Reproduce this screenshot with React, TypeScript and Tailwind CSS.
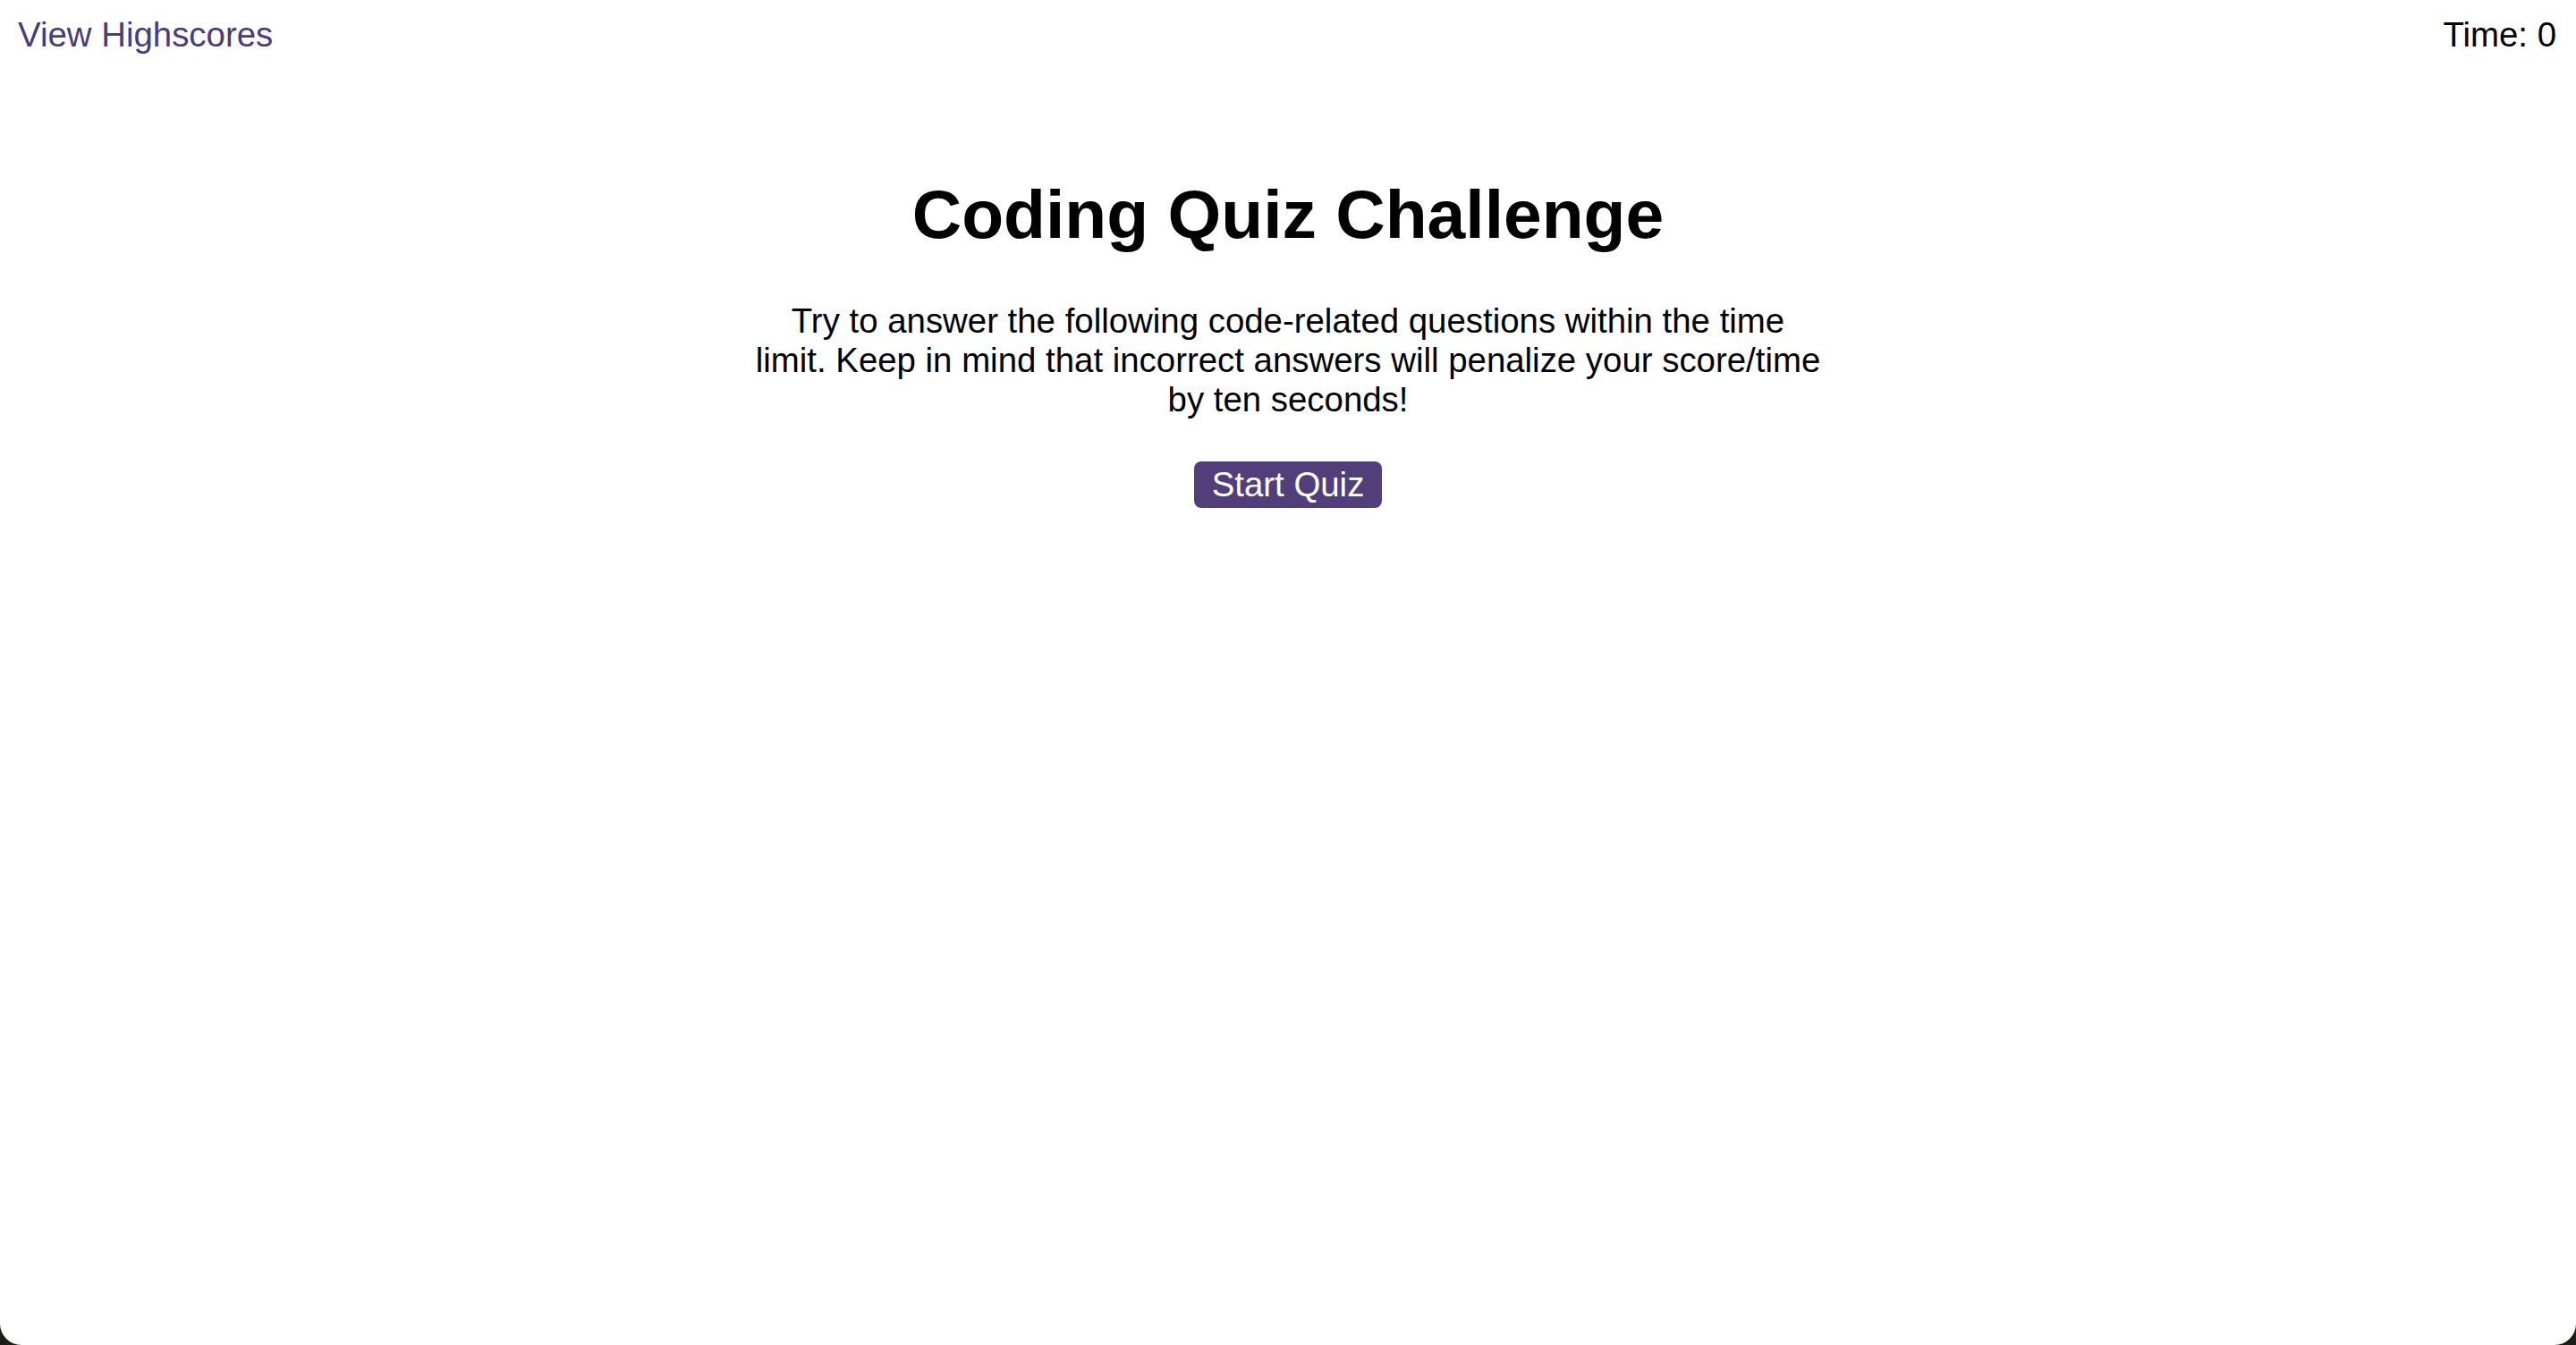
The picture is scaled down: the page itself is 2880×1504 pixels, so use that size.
import React from "react";

export default function App() {
  return (
    <div className="h-[1504px] w-full bg-[#1c1c1a]">
      <div className="h-full w-full bg-white rounded-b-[24px] font-['Liberation_Sans',Arial,Helvetica,sans-serif] text-black">
        <header className="flex justify-between pl-[20px] pr-[22px] pt-[17px] text-[38.4px] leading-[44px]">
          <a href="#" className="text-[#4b3b79]">
            View Highscores
          </a>
          <span>Time: 0</span>
        </header>
        <main className="flex flex-col items-center">
          <h1 className="mt-[134px] text-[76.8px] leading-[88px] font-bold">
            Coding Quiz Challenge
          </h1>
          <p className="mt-[54px] w-[1194px] text-center text-[38.4px] leading-[44px]">
            Try to answer the following code-related questions within the time
            limit. Keep in mind that incorrect answers will penalize your
            score/time by ten seconds!
          </p>
          <button className="mt-[47px] h-[52px] rounded-[8px] bg-[#523f79] px-[20px] text-[38.4px] leading-[44px] text-white">
            Start Quiz
          </button>
        </main>
      </div>
    </div>
  );
}
